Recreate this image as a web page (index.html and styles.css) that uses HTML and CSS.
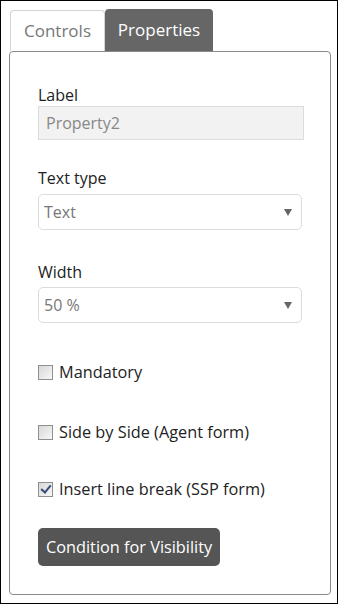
FILE: index.html
```html
<!DOCTYPE html>
<html lang="en">
<head>
    <meta charset="UTF-8">
    <meta name="viewport" content="width=device-width, initial-scale=1.0">
    <title>Properties</title>
    <link rel="stylesheet" href="styles.css">
</head>
<body>
    <div class="frame">
        <div class="tabs">
            <span class="tab">Controls</span>
            <span class="tab active">Properties</span>
        </div>

        <div class="panel">
            <div class="field field-name">
                <label for="label">Label</label>
                <input type="text" id="label" class="text-input" value="Property2" disabled>
            </div>

            <div class="field field-type">
                <label for="textType">Text type</label>
                <div class="select-wrap">
                    <select id="textType">
                        <option>Text</option>
                        <option>Number</option>
                        <option>Date</option>
                    </select>
                </div>
            </div>

            <div class="field field-width">
                <label for="width">Width</label>
                <div class="select-wrap">
                    <select id="width">
                        <option>50 %</option>
                        <option>100 %</option>
                    </select>
                </div>
            </div>

            <label class="check check-mandatory"><input type="checkbox">Mandatory</label>
            <label class="check check-side"><input type="checkbox">Side by Side (Agent form)</label>
            <label class="check check-break"><input type="checkbox" checked>Insert line break (SSP form)</label>

            <button class="btn-visibility">Condition for Visibility</button>
        </div>
    </div>
</body>
</html>
```

FILE: styles.css
```css
* { box-sizing: border-box; }
body { margin: 0; font-family: "Open Sans", "Liberation Sans", sans-serif; font-size: 16px; line-height: 22px; color: #222; background: #fff; }

.frame { width: 338px; height: 604px; border: 1px solid #000; padding: 8px 6px 8px 8px; display: flex; flex-direction: column; }

.tabs { display: flex; align-items: flex-end; }
.tab { display: block; text-align: center; border-radius: 4px 4px 0 0; font-size: 17px; }
.tab:first-child { width: 95px; height: 41px; margin-left: 1px; padding-top: 9px; color: #777; border: 1px solid #d4d4d4; border-bottom: none; }
.tab.active { width: 108px; height: 42px; padding-top: 10px; background: #666; color: #fff; }

.panel { flex: 1; border: 1px solid #8a8a8a; border-radius: 4px; padding: 32px 25px 0 28px; }

.field label { display: block; }
.field-type { margin-top: 27px; }
.field-type label { margin-bottom: 5px; }
.field-width { margin-top: 31px; }
.field-width label { margin-bottom: 4px; }

.text-input { display: block; width: 266px; height: 34px; border: 1px solid #dcdcdc; background: #f2f2f2; padding: 0 7px; font: inherit; color: #888; }

.select-wrap { position: relative; width: 264px; }
.select-wrap select { display: block; width: 100%; height: 36px; border: 1px solid #dcdcdc; border-radius: 5px; background: #fff; padding: 0 5px; font: inherit; color: #777; appearance: none; -webkit-appearance: none; }
.select-wrap::after { content: ""; position: absolute; right: 10px; top: 15px; border-left: 4px solid transparent; border-right: 4px solid transparent; border-top: 7px solid #666; pointer-events: none; }

.check { display: flex; align-items: center; font-size: 16.3px; }
.check input { appearance: none; -webkit-appearance: none; width: 15px; height: 15px; margin: 0 6px 0 0; border: 1px solid #8e8f8f; background: linear-gradient(135deg, #d8d8d8, #f7f7f7); position: relative; }
.check input:checked::after { content: ""; position: absolute; left: 4px; top: 0px; width: 4px; height: 8px; border: solid #3b4a7a; border-width: 0 2px 2px 0; transform: rotate(40deg); }
.check-mandatory { margin-top: 38px; }
.check-side { margin-top: 38px; }
.check-break { margin-top: 35px; }

.btn-visibility { display: block; margin-top: 28px; height: 38px; padding: 0 8px; border: none; border-radius: 5px; background: #555; color: #fff; font: inherit; font-size: 16.3px; cursor: pointer; }
```
